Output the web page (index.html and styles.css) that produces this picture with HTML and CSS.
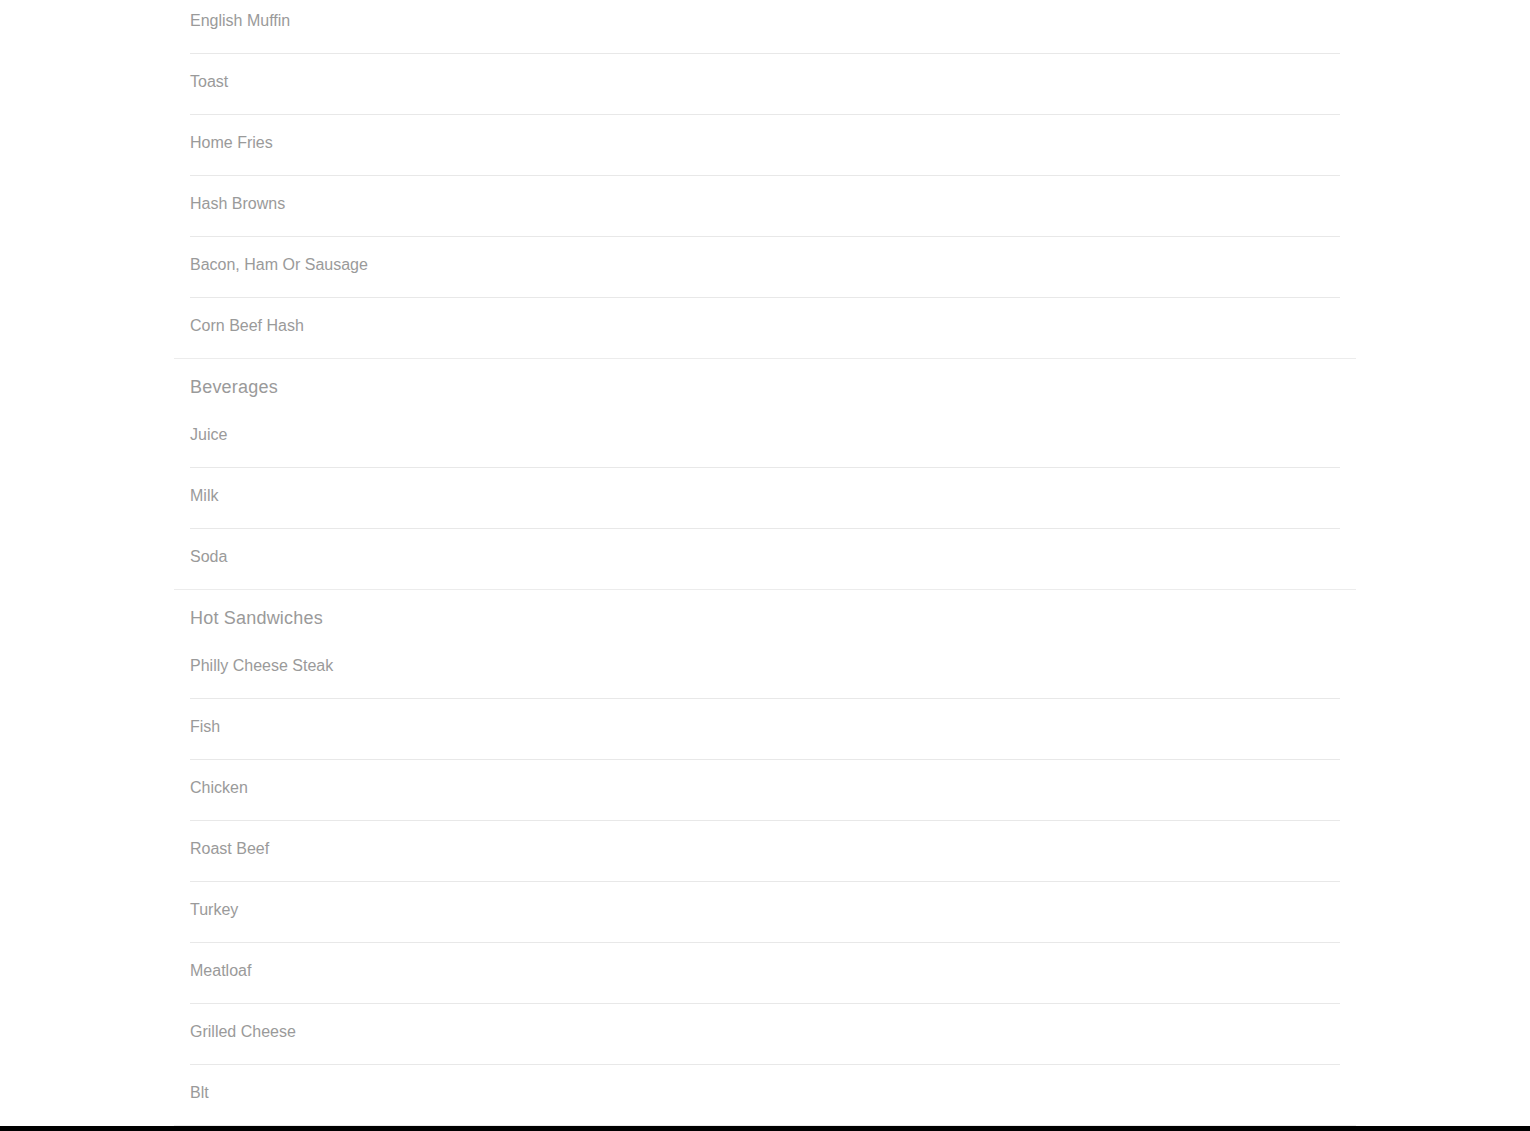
FILE: index.html
```html
<!DOCTYPE html>
<html lang="en">
  <head>
    <meta charset="UTF-8" />
    <title>Menu</title>
    <link rel="stylesheet" href="styles.css">
  </head>
  <body>
    <div class="menu">
      <section class="menu-section first">
        <ul class="items">
          <li>English Muffin</li>
          <li>Toast</li>
          <li>Home Fries</li>
          <li>Hash Browns</li>
          <li>Bacon, Ham Or Sausage</li>
          <li>Corn Beef Hash</li>
        </ul>
      </section>

      <section class="menu-section">
        <h3>Beverages</h3>
        <ul class="items">
          <li>Juice</li>
          <li>Milk</li>
          <li>Soda</li>
        </ul>
      </section>

      <section class="menu-section">
        <h3>Hot Sandwiches</h3>
        <ul class="items">
          <li>Philly Cheese Steak</li>
          <li>Fish</li>
          <li>Chicken</li>
          <li>Roast Beef</li>
          <li>Turkey</li>
          <li>Meatloaf</li>
          <li>Grilled Cheese</li>
          <li>Blt</li>
        </ul>
      </section>
    </div>

    <footer class="footer"></footer>
  </body>
</html>
```

FILE: styles.css
```css
body {
  margin: 0;
  font-family: "Liberation Sans", Arial, sans-serif;
  background-color: #fff;
  color: #9a9a9a;
}

.menu {
  width: 1182px;
  margin: 0 auto;
}

.menu-section {
  padding: 0 16px;
  border-bottom: 1px solid #ececec;
}

/* page is scrolled, top row is cut off */
.menu-section.first {
  margin-top: -7px;
}

.menu-section h3 {
  margin: 0;
  padding: 17px 0 9px;
  font-size: 18px;
  font-weight: normal;
  line-height: 22px;
  letter-spacing: 0.2px;
}

.items {
  list-style: none;
  margin: 0;
  padding: 0;
}

.items li {
  padding: 19px 0 23px;
  font-size: 16px;
  line-height: 18px;
  border-bottom: 1px solid #e8e8e8;
}

.items li:last-child {
  border-bottom: none;
}

.footer {
  background-color: #000;
  height: 40px;
}
```
